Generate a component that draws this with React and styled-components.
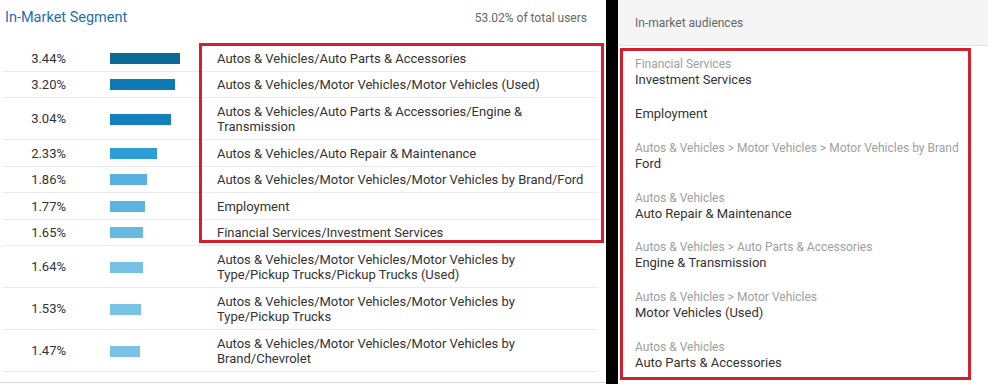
import { createGlobalStyle, styled } from "styled-components";

const segments = [
  { pct: "3.44%", bar: 70, color: "#0b6a96", label: "Autos & Vehicles/Auto Parts & Accessories" },
  { pct: "3.20%", bar: 65, color: "#0e79b2", label: "Autos & Vehicles/Motor Vehicles/Motor Vehicles (Used)" },
  { pct: "3.04%", bar: 61, color: "#1580be", label: "Autos & Vehicles/Auto Parts & Accessories/Engine & Transmission" },
  { pct: "2.33%", bar: 47, color: "#2e9fd5", label: "Autos & Vehicles/Auto Repair & Maintenance" },
  { pct: "1.86%", bar: 37, color: "#5ab3de", label: "Autos & Vehicles/Motor Vehicles/Motor Vehicles by Brand/Ford" },
  { pct: "1.77%", bar: 35, color: "#5db5df", label: "Employment" },
  { pct: "1.65%", bar: 33, color: "#66b9e1", label: "Financial Services/Investment Services" },
  { pct: "1.64%", bar: 33, color: "#76c0e4", label: "Autos & Vehicles/Motor Vehicles/Motor Vehicles by Type/Pickup Trucks/Pickup Trucks (Used)" },
  { pct: "1.53%", bar: 31, color: "#7ac2e5", label: "Autos & Vehicles/Motor Vehicles/Motor Vehicles by Type/Pickup Trucks" },
  { pct: "1.47%", bar: 30, color: "#7ac2e5", label: "Autos & Vehicles/Motor Vehicles/Motor Vehicles by Brand/Chevrolet" },
];

const audiences = [
  { cat: "Financial Services", name: "Investment Services" },
  { cat: "", name: "Employment" },
  { cat: "Autos & Vehicles > Motor Vehicles > Motor Vehicles by Brand", name: "Ford" },
  { cat: "Autos & Vehicles", name: "Auto Repair & Maintenance" },
  { cat: "Autos & Vehicles > Auto Parts & Accessories", name: "Engine & Transmission" },
  { cat: "Autos & Vehicles > Motor Vehicles", name: "Motor Vehicles (Used)" },
  { cat: "Autos & Vehicles", name: "Auto Parts & Accessories" },
];

const GlobalStyle = createGlobalStyle`
  body {
    margin: 0;
    background: #ffffff;
    font-family: Roboto, "Liberation Sans", Arial, sans-serif;
  }
`;

const Page = styled.div`
  display: flex;
  width: 988px;
  height: 384px;
  overflow: hidden;
`;

const LeftPanel = styled.section`
  position: relative;
  width: 606px;
  height: 382px;
  flex-shrink: 0;
  background: #fff;
  border-bottom: 1px solid #d6d6d6;
`;

const Header = styled.div`
  display: flex;
  justify-content: space-between;
  align-items: center;
  height: 55px;
  margin-top: -10px;
  padding: 0 19px 0 5px;
`;

const Title = styled.h2`
  margin: 0;
  font-size: 14.5px;
  font-weight: 400;
  color: #1f6fae;
`;

const Total = styled.span`
  font-size: 12px;
  color: #666;
`;

const Rows = styled.div`
  margin: 0 8px 0 3px;
`;

const Row = styled.div`
  display: grid;
  grid-template-columns: 63px 148px 1fr;
  align-items: center;
  padding: 5.5px 0 4.5px;
  border-bottom: 1px solid #ebebeb;
  font-size: 13px;
  line-height: 15.5px;
  color: #333;
`;

const Pct = styled.span`
  text-align: right;
`;

const BarCell = styled.div`
  display: flex;
  padding-left: 44px;
`;

const Bar = styled.div`
  height: 11px;
  background: ${(p) => p.$color};
`;

const Label = styled.span`
  padding: 0 11px 0 3px;
`;

const Highlight = styled.div`
  position: absolute;
  left: 199px;
  top: 43px;
  width: 399px;
  height: 194px;
  border: 3px solid #d3202e;
  pointer-events: none;
`;

const Divider = styled.div`
  width: 12px;
  flex-shrink: 0;
  background: #000;
`;

const RightPanel = styled.section`
  flex: 1;
  background: #fff;
`;

const RightHeader = styled.div`
  display: flex;
  align-items: center;
  height: 45px;
  padding-left: 17px;
  background: #f5f5f5;
  border-bottom: 1px solid #e2e2e2;
  font-size: 12px;
  color: #666;
`;

const AudienceBox = styled.div`
  display: flex;
  flex-direction: column;
  gap: 19.7px;
  height: 320px;
  margin: 2px 17px 0 2px;
  padding: 5.5px 2px 0 12px;
  border: 3px solid #d3202e;
`;

const Audience = styled.div`
  display: flex;
  flex-direction: column;
  line-height: 15px;
`;

const Category = styled.span`
  font-size: 12px;
  color: #a0a0a0;
  white-space: nowrap;
`;

const Name = styled.span`
  font-size: 13px;
  color: #333;
`;

export default function App() {
  return (
    <>
      <GlobalStyle />
      <Page>
        <LeftPanel>
          <Header>
            <Title>In-Market Segment</Title>
            <Total>53.02% of total users</Total>
          </Header>
          <Rows>
            {segments.map((s) => (
              <Row key={s.label}>
                <Pct>{s.pct}</Pct>
                <BarCell>
                  <Bar $color={s.color} style={{ width: s.bar }} />
                </BarCell>
                <Label>{s.label}</Label>
              </Row>
            ))}
          </Rows>
          <Highlight />
        </LeftPanel>
        <Divider />
        <RightPanel>
          <RightHeader>In-market audiences</RightHeader>
          <AudienceBox>
            {audiences.map((a) => (
              <Audience key={a.name}>
                {a.cat && <Category>{a.cat}</Category>}
                <Name>{a.name}</Name>
              </Audience>
            ))}
          </AudienceBox>
        </RightPanel>
      </Page>
    </>
  );
}
